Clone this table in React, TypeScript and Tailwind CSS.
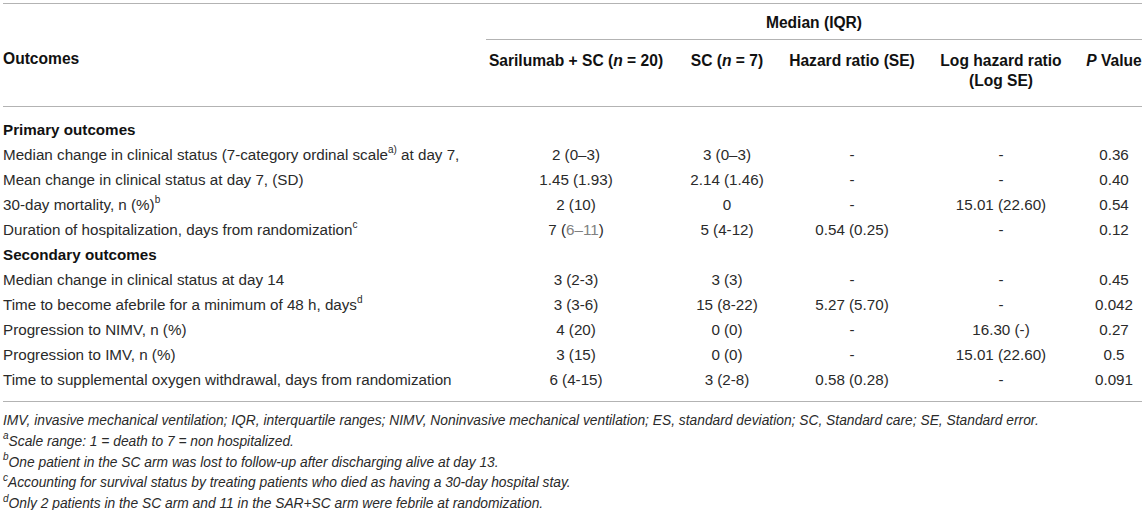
import React from "react";

type Row = {
  label: React.ReactNode;
  sar: React.ReactNode;
  sc: string;
  hr: string;
  loghr: string;
  p: string;
};

const Sup = ({ children }: { children: React.ReactNode }) => (
  <sup className="text-[10px] leading-none relative -top-[1px] align-super">{children}</sup>
);

const primary: Row[] = [
  {
    label: (
      <>
        Median change in clinical status (7-category ordinal scale<Sup>a)</Sup> at day 7,
      </>
    ),
    sar: "2 (0–3)",
    sc: "3 (0–3)",
    hr: "-",
    loghr: "-",
    p: "0.36",
  },
  {
    label: "Mean change in clinical status at day 7, (SD)",
    sar: "1.45 (1.93)",
    sc: "2.14 (1.46)",
    hr: "-",
    loghr: "-",
    p: "0.40",
  },
  {
    label: (
      <>
        30-day mortality, n (%)<Sup>b</Sup>
      </>
    ),
    sar: "2 (10)",
    sc: "0",
    hr: "-",
    loghr: "15.01 (22.60)",
    p: "0.54",
  },
  {
    label: (
      <>
        Duration of hospitalization, days from randomization<Sup>c</Sup>
      </>
    ),
    sar: (
      <>
        7 (<span className="text-[#808080]">6–11</span>)
      </>
    ),
    sc: "5 (4-12)",
    hr: "0.54 (0.25)",
    loghr: "-",
    p: "0.12",
  },
];

const secondary: Row[] = [
  {
    label: "Median change in clinical status at day 14",
    sar: "3 (2-3)",
    sc: "3 (3)",
    hr: "-",
    loghr: "-",
    p: "0.45",
  },
  {
    label: (
      <>
        Time to become afebrile for a minimum of 48 h, days<Sup>d</Sup>
      </>
    ),
    sar: "3 (3-6)",
    sc: "15 (8-22)",
    hr: "5.27 (5.70)",
    loghr: "-",
    p: "0.042",
  },
  {
    label: "Progression to NIMV, n (%)",
    sar: "4 (20)",
    sc: "0 (0)",
    hr: "-",
    loghr: "16.30 (-)",
    p: "0.27",
  },
  {
    label: "Progression to IMV, n (%)",
    sar: "3 (15)",
    sc: "0 (0)",
    hr: "-",
    loghr: "15.01 (22.60)",
    p: "0.5",
  },
  {
    label: "Time to supplemental oxygen withdrawal, days from randomization",
    sar: "6 (4-15)",
    sc: "3 (2-8)",
    hr: "0.58 (0.28)",
    loghr: "-",
    p: "0.091",
  },
];

function DataRow({ row, last }: { row: Row; last?: boolean }) {
  const pad = last ? "pb-[9px]" : "";
  return (
    <tr className="h-[25px]">
      <td className={`text-left whitespace-nowrap ${pad}`}>{row.label}</td>
      <td className={`text-center whitespace-nowrap ${pad}`}>{row.sar}</td>
      <td className={`text-center whitespace-nowrap ${pad}`}>{row.sc}</td>
      <td className={`text-center whitespace-nowrap ${pad}`}>{row.hr}</td>
      <td className={`text-center whitespace-nowrap ${pad}`}>{row.loghr}</td>
      <td className={`text-center whitespace-nowrap ${pad}`}>{row.p}</td>
    </tr>
  );
}

export default function App() {
  return (
    <div
      className="min-h-screen bg-white text-[#2a2a2a] pl-[3px] pr-1 pt-[3px] overflow-hidden"
      style={{ fontFamily: '"Liberation Sans", Arial, sans-serif' }}
    >
      <div className="w-[1139px] text-[15.2px] leading-[25px]">
        <table className="w-full table-fixed border-collapse">
          <colgroup>
            <col className="w-[483px]" />
            <col className="w-[180px]" />
            <col className="w-[122px]" />
            <col className="w-[128px]" />
            <col className="w-[170px]" />
            <col className="w-[56px]" />
          </colgroup>
          <thead className="font-bold text-[#111] text-[15.6px] leading-[20px]">
            <tr className="border-t-[1.5px] border-[#b3b3b3]">
              <th rowSpan={2} className="text-left align-top pt-[45px] font-bold">
                Outcomes
              </th>
              <th
                colSpan={5}
                className="text-center align-top pt-[9px] pb-[6px] border-b-[1.5px] border-[#b3b3b3] font-bold"
              >
                Median (IQR)
              </th>
            </tr>
            <tr className="border-b-[1.5px] border-[#b3b3b3]">
              <th className="text-center align-top pt-[11px] pb-[15px] font-bold whitespace-nowrap">
                Sarilumab + SC (<i>n</i> = 20)
              </th>
              <th className="text-center align-top pt-[11px] pb-[15px] font-bold whitespace-nowrap">
                SC (<i>n</i> = 7)
              </th>
              <th className="text-center align-top pt-[11px] pb-[15px] font-bold whitespace-nowrap">
                Hazard ratio (SE)
              </th>
              <th className="text-center align-top pt-[11px] pb-[15px] font-bold whitespace-nowrap">
                Log hazard ratio
                <br />
                (Log SE)
              </th>
              <th className="text-center align-top pt-[11px] pb-[15px] font-bold whitespace-nowrap">
                <i>P</i> Value
              </th>
            </tr>
          </thead>
          <tbody>
            <tr className="h-[25px]">
              <td colSpan={6} className="text-left font-bold text-[#111] pt-[10px]">
                Primary outcomes
              </td>
            </tr>
            {primary.map((r, i) => (
              <DataRow key={`p${i}`} row={r} />
            ))}
            <tr className="h-[25px]">
              <td colSpan={6} className="text-left font-bold text-[#111]">
                Secondary outcomes
              </td>
            </tr>
            {secondary.map((r, i) => (
              <DataRow key={`s${i}`} row={r} last={i === secondary.length - 1} />
            ))}
          </tbody>
        </table>
        <div className="border-t-[1.5px] border-[#b3b3b3] pt-[9px] italic text-[13.8px] leading-[20.8px] text-[#2a2a2a] whitespace-nowrap">
          <p>
            IMV, invasive mechanical ventilation; IQR, interquartile ranges; NIMV, Noninvasive mechanical
            ventilation; ES, standard deviation; SC, Standard care; SE, Standard error.
          </p>
          <p>
            <Sup>a</Sup>Scale range: 1 = death to 7 = non hospitalized.
          </p>
          <p>
            <Sup>b</Sup>One patient in the SC arm was lost to follow-up after discharging alive at day 13.
          </p>
          <p>
            <Sup>c</Sup>Accounting for survival status by treating patients who died as having a 30-day
            hospital stay.
          </p>
          <p>
            <Sup>d</Sup>Only 2 patients in the SC arm and 11 in the SAR+SC arm were febrile at randomization.
          </p>
        </div>
      </div>
    </div>
  );
}
